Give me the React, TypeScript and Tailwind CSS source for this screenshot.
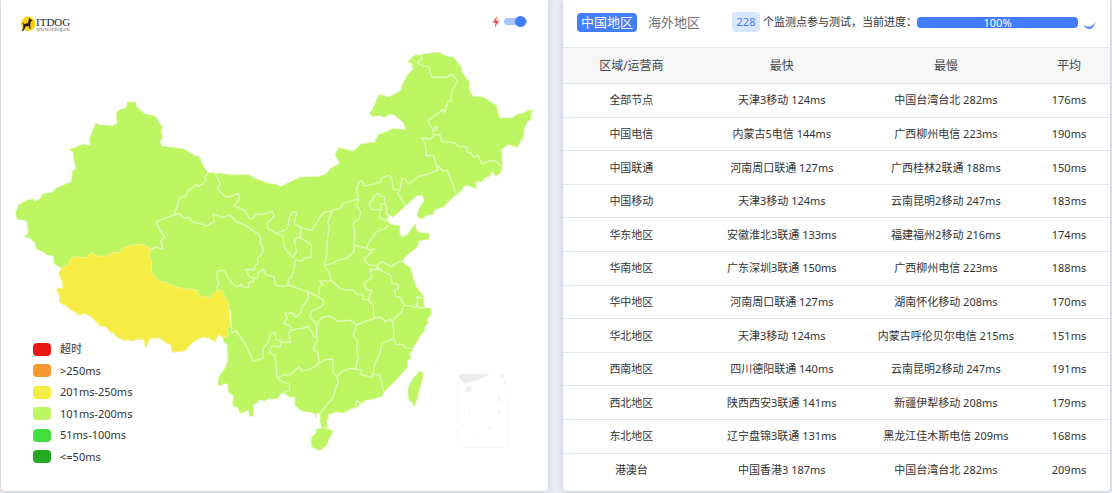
import { useState } from "react";

type Row = [string, string, string, string];

const rows: Row[] = [
  ["全部节点", "天津3移动 124ms", "中国台湾台北 282ms", "176ms"],
  ["中国电信", "内蒙古5电信 144ms", "广西柳州电信 223ms", "190ms"],
  ["中国联通", "河南周口联通 127ms", "广西桂林2联通 188ms", "150ms"],
  ["中国移动", "天津3移动 124ms", "云南昆明2移动 247ms", "183ms"],
  ["华东地区", "安徽淮北3联通 133ms", "福建福州2移动 216ms", "174ms"],
  ["华南地区", "广东深圳3联通 150ms", "广西柳州电信 223ms", "188ms"],
  ["华中地区", "河南周口联通 127ms", "湖南怀化移动 208ms", "170ms"],
  ["华北地区", "天津3移动 124ms", "内蒙古呼伦贝尔电信 215ms", "151ms"],
  ["西南地区", "四川德阳联通 140ms", "云南昆明2移动 247ms", "191ms"],
  ["西北地区", "陕西西安3联通 141ms", "新疆伊犁移动 208ms", "179ms"],
  ["东北地区", "辽宁盘锦3联通 131ms", "黑龙江佳木斯电信 209ms", "168ms"],
  ["港澳台", "中国香港3 187ms", "中国台湾台北 282ms", "209ms"],
];

const legend = [
  { color: "bg-[#e81813]", label: "超时" },
  { color: "bg-[#f89a33]", label: ">250ms" },
  { color: "bg-[#f6ed44]", label: "201ms-250ms" },
  { color: "bg-[#bef663]", label: "101ms-200ms" },
  { color: "bg-[#42dd3f]", label: "51ms-100ms" },
  { color: "bg-[#22aa22]", label: "<=50ms" },
];

const mainland =
  "M15.5 212.7L17 210L18.3 205.3L25 201.5L28 199.5L31 200L32.3 198.3L34 201.3L40 199.3L43.3 193.7L51.7 193L56 188.3L71.7 181.7L72.3 171.7L76 168.3L74 160L73.3 152L69.7 149.3L85 144L87 145.5L90.7 145.7L89.3 140L95.7 123.3L100 125.3L109 125.3L112 126.3L117.3 123.3L116.3 113.3L119.3 110L126.7 107.7L127.3 102L135.7 102L136 106L139 109L145 114.3L150 115L156 116.7L158 121L162.3 126.7L161 131L162.5 137L159.7 141.7L162 146.3L184 149L195 156L199 156.3L204 167.7L208 172.7L215 173L233.3 175L248.3 174.7L255 178.3L260 180.5L268.3 183.4L275 184.3L280.7 186.7L300 177.3L318.3 176.7L326 174L331.3 168L339.7 163.3L335.3 155L338.3 147.7L353.3 151.3L361.3 144L375 142L378.3 134.7L386.7 131.7L393.3 128.7L406.3 129.7L403.3 122.3L394.3 114.7L389.3 114.3L384.3 117.3L379 115.3L372.3 116.7L369.7 113.3L372.7 109.3L379.3 94.3L388.7 97.3L401.3 90.7L401.7 86L408.3 74L413.3 69.3L411.7 62.7L407.7 62L414.3 55.3L438.3 52.3L448.3 57L453.3 57.3L461 66.7L462.3 72.7L469.3 82.7L469 88L470.7 93.3L473.3 96.7L482 97L486.7 99L490 101.5L496.7 105.7L497.3 111.7L500 118L512.7 118L516 115L524 113L528 110.5L533.3 110.3L530.7 114L530.7 119.3L527.3 121.7L524 129L523.3 136.7L517 147.3L508 144.3L501 149.7L502 157L502 168.3L500.7 172.7L496 176L492.3 170.7L490 176L486 177L481.7 181.3L475 182.3L476.3 188.3L466.7 185.3L463 187L461 191L456.7 194.3L448 202L443.3 206.7L434 210L433.3 214.3L427 215L421.7 218.7L417.3 216.7L418.7 209.3L424.7 200L422.3 195.3L417.3 195.3L405.7 205.7L398.3 212.3L393.3 216.7L388.3 214.5L387.5 220L390 224.3L400 226L399.3 233.3L402.7 237.3L407 235L413.3 226.7L415 224L416.7 230.7L421 233L429.3 233.3L428.7 239.3L422 240L418.3 241.7L418 244L416.7 247.7L412 251L406 256L401.7 261.7L406 265L410 267.3L416 286.7L420 292L423.3 296L424 307.7L430.7 308.3L431.3 314.3L426.7 320L428 323L424.5 327L425 330L420 336L417 342L413.3 346.7L413 350L409 354L411 357L407 361L407.5 367L402 373L398 378L391 385L384 391.7L382 396L378.3 397.3L372 399L365.7 400L360 404L356.7 407.3L350 409L344 412.7L336 412L328.3 414.3L328.3 418L326.3 421L327.7 427.3L322 427.7L320 420L320.7 412.7L316 413.5L316 418L315 413.5L310 412L305 411.5L300 410L295 405L295.3 397.3L288.3 396.7L286 394L283.3 392.7L280 394L278.3 398L272 399L269 398L265 401L259 399.5L257 403L253.3 404.3L253.3 416L249.3 416L248.7 409.3L245 412L240 412.7L238 407L232.7 405.7L233.7 395L228.7 392.7L227.7 383.3L224 384L218.7 385.7L218.3 378.3L225.7 367.3L228 360L227.3 344.3L224 342.3L222.7 337.3L218.3 334.3L215 341.7L209 338L202.7 337L196 340L191.7 342.7L185 350.7L172.3 352L170.7 344.3L166.7 343.3L159.3 337.7L150 338.3L145.7 347.3L144 339.3L138 339L131.7 341L127 339.5L125 341L121.7 339L117 337L113.3 332.3L110 332L106 326.7L100 325.7L95 320L87.3 314L82 313.5L80 315.3L76 312.5L70 309.3L67 306L60 302.7L59.3 295L56.7 289.3L60 288L63.3 289.3L62.7 281.7L58.7 273.3L62 268.3L56 265L54 263.3L53.3 255.3L46.7 254.7L42 251L36.7 249.3L35 242.7L30 238L24.7 236.7L28.3 233.3L27.3 221.7L24 220L17.3 219.3Z";

const tibet =
  "M62 267.5L68.3 265L70 260L72.7 256.7L86.7 257.7L90.7 252.7L94 254L96.7 256L106.7 256.3L111.7 253L120 252.3L123.3 248L133.3 244.7L142.7 244.7L150 247.7L150.5 251L148.7 256L151.7 260L151.3 271.7L154 276L158.3 281L166.7 282.7L171 285L176.7 287.3L186 289L196.7 290L199 294L201.7 297.3L205 296L208 298L211.7 297.3L212.3 294L216.7 292.7L217.3 289L222.7 291L225 297L228.3 301.7L230.3 325L227 329L228 334L226 337.3L222.7 337.3L218.3 334.3L215 341.7L209 338L202.7 337L196 340L191.7 342.7L185 350.7L172.3 352L170.7 344.3L166.7 343.3L159.3 337.7L150 338.3L145.7 347.3L144 339.3L138 339L131.7 341L127 339.5L125 341L121.7 339L117 337L113.3 332.3L110 332L106 326.7L100 325.7L95 320L87.3 314L82 313.5L80 315.3L76 312.5L70 309.3L67 306L60 302.7L59.3 295L56.7 289.3L60 288L63.3 289.3L62.7 281.7L58.7 273.3Z";

const borders = [
  // Xinjiang with Gansu and Qinghai
  "M208 172.7L204.7 177.3L206 180L203 184L200 185.3L199 187L196.7 184.7L192 188L187.3 191.7L186 196.7L180 197.3L174.3 214.7L164 218.5L156 221.7L158 225L158.7 228.3L164.7 237L160 241.7L162.5 244L162.3 249L155 247L153 249L150 248.7",
  // Qinghai with Gansu and Sichuan
  "M174.3 214.7L180 213.7L182 217L186.7 218.3L189 217.5L193.3 222.3L200 223.5L206.7 226L210 224L214 221.7L213.3 214.3L221.7 217.3L230 215.3L237 222L240 223.3L246 225.5L253.3 230.7L259 235L260.7 238.3L260 243L263.3 248.3L262 254L257.3 258.3L258 263L255 266.7L254 270L245.7 269.3L249.3 276.7L254 278.3L253.3 281.7L249 282L248.3 287.3L243 287L241 284L239.3 286L235 286L231.7 282.7L228 278L225 271.7L221 270L217.3 271.7L216.7 278.3L219 283.3L216.7 288.3",
  // Inner Mongolia
  "M215 173L220 183.3L217.3 188.3L226 197.3L231 196L238.3 193.3L239.3 198.3L234.3 206L245 210.7L249.3 218.3L253 218.5L255 214L263.3 214.3L272.7 211.3L274 216L267.3 223.3L267.7 228.3L276 233.5L287.3 229L289.3 217.3L293.3 211.7L296.7 212.7L294 223.3L300 226.7L303 228L311.7 230.7L315 225L320 217L325 211.7L328 212L333.3 210L340 208.3L343.3 203.3L351 201L358.3 199L356.7 188.3L359 182L361.7 180.7L365 186L374 184L380 182.3L381.7 177.7L389.3 175.3L392 180L393.3 189L400 190L401.7 178.3L405 179L408.3 184.3L418.3 176.7L428.3 174L437.7 170L433.3 155L426.7 156L425 143.3L421.7 137.7L430 139.3L433.7 135L432.7 129.3L427.7 121L443.3 109.3L444.7 112.7L447.7 101.7L451 101L451.7 91.7L457.7 80.7L451.7 74L447.3 77.3L438 77L431.7 77.3L429 66.7L423.3 66L417.3 62.7L422.3 58.3L420 54.3",
  "M433.7 129L437 126L437 130L433 131",
  // Heilongjiang with Jilin, Jilin with Liaoning, Liaoning with Hebei
  "M433.7 135L440 134.7L441.7 141.7L450 142L455 143.3L458 146L466 146.7L467.3 152.3L471 153L473.3 157.3L478.3 155L481.7 164L490.7 160.7L496 161L500.7 166",
  "M437.7 170L437.7 166L443.3 171L447.3 170L451.7 181.7L455.7 193.3",
  "M400 190L397.7 194L403.3 201.7L405.7 205.7",
  // Beijing and Tianjin
  "M378.3 193.3L380 196L384.3 197.3L385 203.3L380.7 204L381.7 210L371.7 209.3L369 203.3L373.3 199.3L373.3 196.7L378.3 193.3M385 201.7L387.3 209.3L386 213L389 216M379.7 208.3L380 218.3L386 220.7L388.3 217",
  // Shanxi
  "M358.3 199L356.7 206.7L360.7 211.7L359.3 218.3L353.3 223.3L355 233.3L354 245L354 251.7L346.7 258.3L338.3 260L333.3 263.3L324.3 265L327.3 253.3L326.7 241.7L329.3 230L327.7 221.7L331 214L333.3 210",
  // Shandong
  "M354 245L366.7 248.3L368.3 243.3L373.3 236.7L376.7 231.7L385 228.3L388.3 225M366.7 246L368 250L374 249L364 259.3L368.3 265L376.7 266L381.7 261.7L391.7 266.7L395 264L401.7 260.7",
  // Anhui, Jiangsu and Shanghai
  "M376.7 266L378 270L370 269.3L371.7 278.3L364.3 282.7L366.7 290L371.7 290L368.3 300M376.7 266L382.7 271.7L390.7 275L391.7 282.7L398.3 285L398.3 289L394.3 290L395.7 296.7L400 297.3L404 305L410 306L416.7 307.7M422.7 298.3L416.7 296.7L418 300L416 305L419 308L424 307.7M404 305L401.7 311.7L397 316L392.3 321.7",
  "M368.3 300L373.3 305L374 318.3L381.7 317.3L385 321.7L390 319.3L392.3 321.7L394 331.7L393.3 338.3",
  // Henan with Hubei, Shaanxi with Hubei
  "M324.3 265L327.7 270L331.7 281L335 284L340 288.3L345 290L353.3 290L357 294L363.3 295L363.3 299L368.3 300M331.7 281L319 281L323.3 285L319.3 286.7L319 295",
  // Ningxia and eastern Gansu
  "M300 226.7L301 230L300 237.3L311.7 245L311 257.3L305 257.7L301.7 261L295 260L294 268.3L291.7 276.7L288 279L288.3 285M276 233.5L283.3 236L284 246.7L288 252L292.7 257.7L296.7 251.7L294.3 241.7L295.7 238.3L300 237.3",
  "M254 278.3L257.3 278.3L258.3 272.7L263.3 269.3L265.7 275L274 276.7L275.7 285L283.3 286.7L288 285L297 288L308.3 292.3L315 295L319 297.3",
  // Chongqing
  "M308.3 292.3L308.3 298.3L303 306L300 313.3L296 317L292 313L285 313.3L287.3 318.3L283.3 323.3L290 326L291.7 330L301.7 328.3L308.3 326.7L311.7 331.7L314.3 336.7L316.7 336L316.7 325L310 316.7L311.7 310.7L319 308L324 304L323 300L319 297.3",
  // Hunan
  "M316.7 325L321.7 317.7L330 316L338.3 321.7L350 320L356.7 325L366 321L374 319M356.7 325L353.3 335L357.7 341.7L356.7 350L358.5 360L356.7 361L356 369.3M316.7 336L317.3 340L315 344L313.3 349.3L318.3 353.3L319.3 362.7L326.7 359.3L332.7 359.3L333.3 373.3L336.7 376.7L341.7 371.7L350 368.3L362.7 370L360 374L371.7 377.7",
  // Jiangxi, Fujian and Guangdong
  "M371.7 377.7L373 374L380 375L382.7 388.3L384 391.7M372.7 375L375 363.3L380 353.3L381.7 343.3L388 341L393.3 338.3L396.7 345L401.7 344L406 348L412 349",
  "M336.7 376.7L338.3 381.7L335 390L333.3 397.3L326.7 405L320.7 412.7",
  "M357 400L361 404L359 407L355 405Z",
  // Guizhou, Guangxi and Yunnan
  "M319.3 362.7L315 366.7L308 370L301.7 371L299.3 366.7L290 375L284 375L277.3 377.7L276 366L275 355L269.3 353.3L271.7 346L280 347L281.7 341.7L290.7 342.7L288.3 333.3L291.7 330M277.3 377.7L281.7 381.7L289.3 384L290 390L283.3 392.7",
  "M230.3 310L231.7 333.3L236 330.7L240 336.7L244 341.7L248 350L253.3 361L263.3 358.3L262.7 349.3L268.3 341.7L270 334L275 332.7L276 339.3L281.7 341.7",
];

const hainan =
  "M316.7 429.3L324 428L332.7 430.7L331 436L328 440L327.7 444L323 448L320 450.7L311.7 446.7L311.3 437.3L316 433.3Z";
const taiwan = "M420 370.7L423 373.3L422 381L419 390L417 399L414 406.7L413 403L409 400L408 390L410 384L413.3 378.3Z";

function ChinaMap() {
  return (
    <svg viewBox="1 40 547 420" className="block w-full" role="img" aria-label="中国地区延迟分布">
      <g fill="#bef663" stroke="#cdf787" strokeWidth="0.7" strokeLinejoin="round">
        <path d={mainland} />
        <path d={hainan} />
        <path d={taiwan} />
      </g>
      <path d={tibet} fill="#f6ed44" stroke="#f8f286" strokeWidth="1" strokeLinejoin="round" />
      <g fill="none" stroke="#e7fbc6" strokeWidth="1.2" strokeLinejoin="round">
        {borders.map((d) => (
          <path key={d} d={d} />
        ))}
      </g>
      <g fill="#ececec">
        <path d="M458.5 377L461 374H490L482 378Q474 382 464 383Z" />
        <path d="M500 374H504L502.500 379ZM467 387L472 386L470 391L466 392ZM504 383L506 381L505 385ZM498 397H500V401H498ZM499 410L497 415L500 412ZM490 426L488 431L491 428ZM468 413L471 411L469 415ZM463 425H464V428H463ZM467 400L469 403ZM477 439L480 438L478 440ZM437 364H439V365H437Z" />
      </g>
      <path d="M458.500 376V447.500H508.500V398" fill="none" stroke="#f7f7f7" />
    </svg>
  );
}

function Logo() {
  return (
    <a href="#" aria-label="ITDOG" className="flex items-center text-[#222]">
      <svg viewBox="0 0 16 16" className="h-4 w-4" aria-hidden="true">
        <circle cx="8.200" cy="7.800" r="7.200" fill="#fdd30a" />
        <path
          d="M9.400 1.500L10.200 3L12.400 4.200L11.800 5.300L10.600 5.600L10.300 9.300L10.700 13H9.600L8.900 10.300L5.600 10.200L5 12L3.400 14.800H1.400L3.300 12.300L3.400 9.400L2.500 7.600L3 6.200L3.800 8L7.900 7.200Z"
          fill="#1c1c14"
        />
      </svg>
      <span className="flex flex-col font-['Liberation_Serif',serif]">
        <span className="text-[11px] leading-[10px]">ITDOG</span>
        <span className="text-[6px] leading-[4px] text-[#777]">www.itdog.cn</span>
      </span>
    </a>
  );
}

function MapCard() {
  const [fast, setFast] = useState(true);
  return (
    <section className="relative rounded-b bg-white shadow-[0_1px_6px_rgba(120,135,160,0.35)]">
      <header className="flex h-10 items-center justify-between pt-2 pr-[21px] pl-[19px]">
        <Logo />
        <label className="flex items-center gap-1 pb-[5px]">
          <svg viewBox="0 0 8 12" className="h-3 w-2" aria-hidden="true">
            <path d="M4.800 0L0.800 6.800H3.500L2.600 12L7.200 4.800H4.400Z" fill="#f0544f" />
          </svg>
          <input
            type="checkbox"
            role="switch"
            aria-label="快速模式"
            checked={fast}
            onChange={(e) => setFast(e.target.checked)}
            className="flex h-[7px] w-[23px] appearance-none items-center rounded-full bg-[#a9c3fd] before:h-[11px] before:w-[11px] before:shrink-0 before:rounded-full before:bg-[#437dff] checked:before:ml-[11px]"
          />
        </label>
      </header>
      <ChinaMap />
      <ul className="absolute bottom-[27px] left-8 flex h-[122px] flex-col justify-between text-[11px] leading-[14px] text-[#333]">
        {legend.map((item) => (
          <li key={item.label} className="flex items-center gap-[9px]">
            <span className={`h-[13px] w-[18px] rounded ${item.color}`} />
            {item.label}
          </li>
        ))}
      </ul>
    </section>
  );
}

function ResultCard() {
  const [tab, setTab] = useState(0);
  return (
    <section className="overflow-hidden rounded-b bg-white pb-[5px] shadow-[0_1px_6px_rgba(120,135,160,0.35)]">
      <header className="flex h-[47px] items-center pr-[13px] pb-[3px] pl-[14px] whitespace-nowrap">
        <div className="flex gap-[7px]">
          {["中国地区", "海外地区"].map((name, i) => (
            <button
              key={name}
              type="button"
              onClick={() => setTab(i)}
              className={
                tab === i
                  ? "h-[19px] rounded bg-[#437dff] px-1 text-[13px] leading-[19px] text-white"
                  : "h-[19px] rounded px-1 text-[13px] leading-[19px] text-[#6c6f75]"
              }
            >
              {name}
            </button>
          ))}
        </div>
        <span className="ml-7 flex h-5 w-7 items-center justify-center rounded bg-[#dae5ff] text-[11px] text-[#437dff]">228</span>
        <span className="ml-[3px] text-[11px] text-[#333]">个监测点参与测试，当前进度：</span>
        <div
          role="progressbar"
          aria-label="当前进度"
          aria-valuenow={100}
          className="h-[11px] flex-1 rounded bg-[#437dff] text-center text-[11px] leading-[11px] text-white"
        >
          100%
        </div>
        <svg viewBox="0 0 14 14" className="ml-[5px] h-[14px] w-[14px]" aria-hidden="true">
          <path d="M0.800 10Q7 14.500 12.500 7Q10 15 5.500 14Q2 13.500 0.800 10Z" fill="#5a8cff" />
        </svg>
      </header>
      <table className="h-[439px] w-full table-fixed border-collapse text-center text-[11px] leading-4 text-[#333]">
        <thead>
          <tr className="h-9 border-y border-[#e1e6eb] bg-[#f7f7f7] text-[12px] text-[#41464d]">
            <th className="w-[25%] font-normal">区域/运营商</th>
            <th className="w-[30%] font-normal">最快</th>
            <th className="w-[30%] font-normal">最慢</th>
            <th className="w-[15%] font-normal">平均</th>
          </tr>
        </thead>
        <tbody>
          {rows.map((row) => (
            <tr key={row[0]} className="border-b border-[#e1e6eb] last:border-b-0">
              {row.map((cell, i) => (
                <td key={i}>{cell}</td>
              ))}
            </tr>
          ))}
        </tbody>
      </table>
    </section>
  );
}

export default function App() {
  return (
    <main
      lang="zh-CN"
      className="grid min-h-screen grid-cols-2 gap-[15px] bg-[#e8ecf4] pr-0.5 pb-0.5 pl-px font-['Noto_Sans','Noto_Sans_CJK_SC',sans-serif]"
    >
      <MapCard />
      <ResultCard />
    </main>
  );
}
